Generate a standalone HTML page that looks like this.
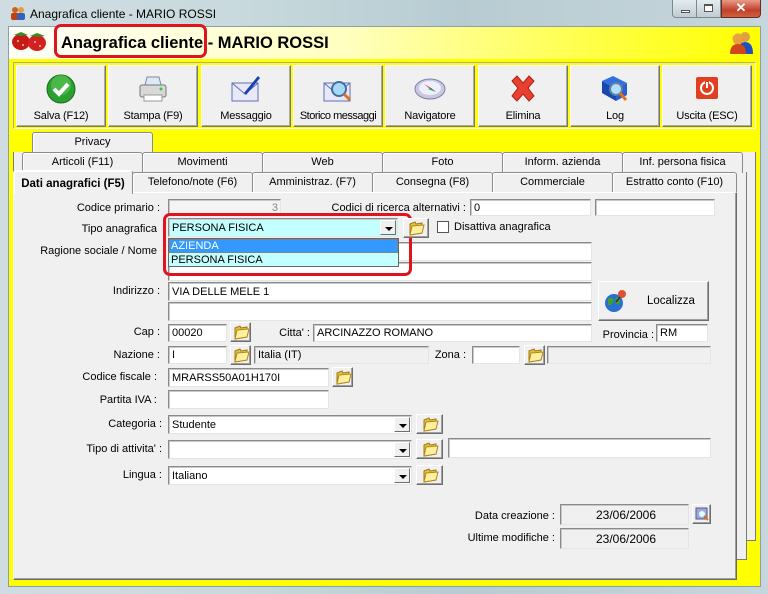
<!DOCTYPE html>
<html><head><meta charset="utf-8"><style>
*{box-sizing:border-box;margin:0;padding:0}
body{width:768px;height:594px;overflow:hidden;position:relative;font-family:"Liberation Sans",sans-serif;font-size:11px;color:#000;background:linear-gradient(90deg,#cfdde3,#c8dadd 30%,#b7ccd2 60%,#c6d6dc);}
.a{position:absolute}
.t{position:absolute;white-space:nowrap;font-size:11px;line-height:14px}
.r{text-align:right}
.fld{position:absolute;background:#fff;border:1px solid;border-color:#8a8a8a #e4e4e4 #e4e4e4 #8a8a8a;box-shadow:inset 1px 1px 0 #c8c8c8;font-size:11px;padding-left:3px;white-space:nowrap;overflow:hidden;display:flex;align-items:center}
.gr{background:#f0f0f0}
.btn{position:absolute;background:#f0f0f0;border:1px solid;border-color:#fff #6e6e6e #6e6e6e #fff;box-shadow:inset -1px -1px 0 #a0a0a0}
.dd{position:absolute;right:1px;top:1px;bottom:1px;width:16px;background:#f0f0f0;border:1px solid;border-color:#fff #6e6e6e #6e6e6e #fff}
.dd:after{content:"";position:absolute;left:4px;top:6px;border-left:4px solid transparent;border-right:4px solid transparent;border-top:4px solid #000}
.tab{position:absolute;background:#f0f0f0;border:1px solid #8c8c8c;border-bottom:none;border-radius:3px 3px 0 0;text-align:center;font-size:11px;line-height:18px;box-shadow:inset 1px 1px 0 #fff;white-space:nowrap}
.tb{position:absolute;top:65px;height:62px;background:#f0f0f0;border:1px solid;border-color:#fff #777 #777 #fff;box-shadow:inset -1px -1px 0 #aaa;text-align:center;font-size:11px;white-space:nowrap}
.tb span{position:absolute;left:0;right:0;top:44px;letter-spacing:-0.2px}
.tb svg{position:absolute;left:50%;margin-left:-16px;top:7px}
</style></head><body>
<!-- title bar -->
<div class="a" style="left:10px;top:6px;width:16px;height:14px">
<svg width="16" height="14"><circle cx="5" cy="4" r="3" fill="#d06020"/><rect x="1" y="7" width="8" height="7" rx="2" fill="#c04010"/><circle cx="11" cy="4" r="3" fill="#e0a040"/><rect x="7" y="7" width="8" height="7" rx="2" fill="#3060c0"/></svg></div>
<div class="t" style="left:30px;top:7px;font-size:12px">Anagrafica cliente - MARIO ROSSI</div>
<div class="a" style="left:672px;top:0;width:25px;height:18px;border:1px solid #7a8a90;border-top:none;border-radius:0 0 0 4px;background:linear-gradient(#e4ecef,#c0ccd2)"><div class="a" style="left:8px;top:10px;width:9px;height:3px;border:1px solid #555;background:#fff"></div></div>
<div class="a" style="left:697px;top:0;width:24px;height:18px;border:1px solid #7a8a90;border-top:none;border-left:none;background:linear-gradient(#e4ecef,#c0ccd2)"><div class="a" style="left:7px;top:4px;width:9px;height:8px;border:1px solid #555;border-top-width:2px;background:#fff"></div></div>
<div class="a" style="left:721px;top:0;width:40px;height:18px;border:1px solid #6a2a20;border-top:none;border-radius:0 0 4px 0;background:linear-gradient(#e89a88,#c0402a 60%,#d06040);color:#fff;font-weight:bold;text-align:center;font-size:13px;line-height:16px">✕</div>

<!-- client -->
<div class="a" style="left:8px;top:26px;width:753px;height:561px;background:#ffff00;border:1px solid #8aa0a8"></div>
<div class="a" style="left:9px;top:27px;width:751px;height:32px;background:linear-gradient(90deg,#fffff8 0%,#ffffc0 45%,#ffff40 80%,#ffff00 100%)"></div>
<svg class="a" style="left:11px;top:30px" width="36" height="22"><ellipse cx="10" cy="12" rx="9" ry="8" fill="#c81818"/><ellipse cx="26" cy="13" rx="9" ry="8" fill="#d42020"/><path d="M3 5 L10 2 L17 5 L10 6Z" fill="#3a8a20"/><path d="M19 6 L26 3 L34 6 L26 7Z" fill="#3a8a20"/><circle cx="7" cy="11" r="1" fill="#f0c0a0"/><circle cx="12" cy="15" r="1" fill="#f0c0a0"/><circle cx="24" cy="12" r="1" fill="#f0c0a0"/><circle cx="29" cy="16" r="1" fill="#f0c0a0"/></svg>
<div class="a" style="left:54px;top:24px;width:153px;height:34px;border:3px solid #e0141e;border-radius:7px"></div>
<div class="t" style="left:61px;top:34px;font-size:16.5px;font-weight:bold;line-height:18px">Anagrafica cliente - MARIO ROSSI</div>
<svg class="a" style="left:729px;top:30px" width="26" height="24"><circle cx="16" cy="7" r="5" fill="#e0a040"/><path d="M9 24 Q9 12 16 12 Q24 12 24 24Z" fill="#2050c0"/><circle cx="9" cy="9" r="5.5" fill="#e8a040"/><path d="M1 24 Q1 14 9 14 Q17 14 17 24Z" fill="#d04818"/></svg>

<!-- toolbar -->
<div class="a" style="left:13px;top:62px;width:743px;height:67px;border:1px solid;border-color:#aaa #fff #fff #aaa"></div>
<div class="tb" style="left:16px;width:90px"><svg width="32" height="32"><circle cx="16" cy="16" r="14" fill="#2aa030" stroke="#167018"/><circle cx="16" cy="12" r="10" fill="#6ad060" opacity=".5"/><path d="M9 16 L14 21 L23 11" stroke="#fff" stroke-width="4" fill="none"/></svg><span>Salva (F12)</span></div>
<div class="tb" style="left:108px;width:90px"><svg width="32" height="32"><path d="M10 4 L22 4 L24 12 L8 12Z" fill="#dde8f8" stroke="#889"/><rect x="3" y="12" width="26" height="12" rx="2" fill="#d8d8d8" stroke="#777"/><rect x="7" y="22" width="18" height="6" fill="#fff" stroke="#999"/><circle cx="24" cy="16" r="1.5" fill="#3c3"/></svg><span>Stampa (F9)</span></div>
<div class="tb" style="left:201px;width:90px"><svg width="32" height="32"><rect x="2" y="10" width="26" height="18" fill="#e8e8f8" stroke="#6070b0"/><path d="M2 10 L15 21 L28 10" fill="none" stroke="#6070b0"/><path d="M14 20 L28 3 L30 5 L16 22Z" fill="#1840b0"/></svg><span>Messaggio</span></div>
<div class="tb" style="left:293px;width:90px"><svg width="32" height="32"><rect x="2" y="10" width="26" height="18" fill="#e8e8f8" stroke="#6070b0"/><path d="M2 10 L15 21 L28 10" fill="none" stroke="#6070b0"/><circle cx="17" cy="16" r="7" fill="#a8d8f8" stroke="#4070a0" stroke-width="2"/><path d="M22 21 L28 27" stroke="#e07020" stroke-width="3"/></svg><span style="letter-spacing:-0.5px">Storico messaggi</span></div>
<div class="tb" style="left:385px;width:90px"><svg width="32" height="32"><ellipse cx="16" cy="16" rx="15" ry="10" fill="#c8c8e0" stroke="#8080a8"/><ellipse cx="16" cy="15" rx="11" ry="7" fill="#eef"/><path d="M10 11 L17 15 L22 19 L15 15Z" fill="#d03020"/><path d="M17 15 L22 19 L14 16Z" fill="#20a040"/></svg><span>Navigatore</span></div>
<div class="tb" style="left:478px;width:90px"><svg width="32" height="32"><path d="M5 8 L10 3 L16 10 L22 3 L27 8 L21 15 L27 23 L22 28 L16 21 L10 28 L5 23 L11 15Z" fill="#e84030" stroke="#b02010"/></svg><span>Elimina</span></div>
<div class="tb" style="left:570px;width:90px"><svg width="32" height="32"><path d="M3 8 L14 3 L28 10 L17 16Z" fill="#3070e0"/><path d="M3 8 L17 16 L17 28 L3 20Z" fill="#1848b0"/><path d="M17 16 L28 10 L28 22 L17 28Z" fill="#2860d0"/><circle cx="17" cy="16" r="6" fill="#b0e0ff" stroke="#6080a0" stroke-width="2"/><path d="M21 20 L27 27" stroke="#e07020" stroke-width="3"/></svg><span>Log</span></div>
<div class="tb" style="left:662px;width:90px"><svg width="32" height="32"><rect x="5" y="4" width="22" height="22" rx="2" fill="#e04020"/><circle cx="16" cy="15" r="6" fill="none" stroke="#fff" stroke-width="2"/><path d="M16 8 L16 15" stroke="#e04020" stroke-width="4"/><path d="M16 9 L16 15" stroke="#fff" stroke-width="2"/></svg><span>Uscita (ESC)</span></div>

<!-- stacked pages -->
<div class="a" style="left:13px;top:152px;width:743px;height:389px;background:#f0f0f0;border:1px solid #7a7a7a;border-top:none"></div>
<div class="a" style="left:13px;top:172px;width:734px;height:388px;background:#f0f0f0;border:1px solid #7a7a7a;border-top:none"></div>
<!-- tabs -->
<div class="tab" style="left:32px;top:132px;width:121px;height:21px">Privacy</div>
<div class="tab" style="left:22px;top:152px;width:121px;height:21px">Articoli (F11)</div>
<div class="tab" style="left:142px;top:152px;width:121px;height:21px">Movimenti</div>
<div class="tab" style="left:262px;top:152px;width:121px;height:21px">Web</div>
<div class="tab" style="left:382px;top:152px;width:121px;height:21px">Foto</div>
<div class="tab" style="left:502px;top:152px;width:121px;height:21px">Inform. azienda</div>
<div class="tab" style="left:622px;top:152px;width:121px;height:21px">Inf. persona fisica</div>
<div class="tab" style="left:132px;top:172px;width:121px;height:21px">Telefono/note (F6)</div>
<div class="tab" style="left:252px;top:172px;width:121px;height:21px">Amministraz. (F7)</div>
<div class="tab" style="left:372px;top:172px;width:121px;height:21px">Consegna (F8)</div>
<div class="tab" style="left:492px;top:172px;width:121px;height:21px">Commerciale</div>
<div class="tab" style="left:612px;top:172px;width:125px;height:21px">Estratto conto (F10)</div>
<!-- main panel -->
<div class="a" style="left:13px;top:192px;width:724px;height:388px;background:#f0f0f0;border:1px solid;border-color:#fff #6a6a6a #6a6a6a #fff;box-shadow:inset -1px -1px 0 #a0a0a0"></div>
<div class="tab" style="left:13px;top:170px;width:120px;height:24px;font-weight:bold;line-height:26px;border-color:#fff #8c8c8c #fff #fff;font-size:11.5px">Dati anagrafici (F5)</div>

<!-- form -->
<div class="t r" style="left:20px;width:140px;top:201px">Codice primario :</div>
<div class="fld gr" style="left:168px;top:199px;width:113px;height:17px;justify-content:flex-end;padding-right:2px;color:#888;background:#f4f4f4">3</div>
<div class="t r" style="left:300px;width:166px;top:201px">Codici di ricerca alternativi :</div>
<div class="fld" style="left:470px;top:199px;width:121px;height:17px">0</div>
<div class="fld" style="left:595px;top:199px;width:120px;height:17px"></div>

<div class="t r" style="left:20px;width:137px;top:222px">Tipo anagrafica</div>
<div class="fld" style="left:168px;top:218px;width:230px;height:19px;background:#c4ffff">PERSONA FISICA<div class="dd"></div></div>
<div class="a" style="left:437px;top:221px;width:12px;height:12px;background:#fff;border:1px solid #555"></div>
<div class="t" style="left:454px;top:220px">Disattiva anagrafica</div>

<div class="t r" style="left:20px;width:137px;top:244px">Ragione sociale / Nome</div>
<div class="fld" style="left:168px;top:242px;width:424px;height:19px"></div>
<div class="fld" style="left:168px;top:262px;width:424px;height:19px"></div>
<!-- dropdown list -->
<div class="a" style="left:168px;top:238px;width:231px;height:29px;background:#c4ffff;border:1px solid #666"></div>
<div class="a" style="left:169px;top:239px;width:229px;height:14px;background:#3399ff;outline:1px dotted #c07020;outline-offset:-1px"></div>
<div class="t" style="left:171px;top:239px;color:#fff">AZIENDA</div>
<div class="t" style="left:171px;top:253px">PERSONA FISICA</div>
<div class="a" style="left:163px;top:213px;width:249px;height:63px;border:3px solid #e0141e;border-radius:7px"></div>

<div class="t r" style="left:20px;width:140px;top:284px">Indirizzo :</div>
<div class="fld" style="left:168px;top:282px;width:424px;height:19px">VIA DELLE MELE 1</div>
<div class="fld" style="left:168px;top:302px;width:424px;height:19px"></div>
<div class="btn" style="left:598px;top:281px;width:111px;height:40px"><svg class="a" style="left:3px;top:6px" width="26" height="26"><circle cx="12" cy="15" r="9" fill="#2a70d0"/><path d="M6 11 Q10 8 12 12 Q10 18 6 17Z M14 9 Q19 10 18 15 Q15 18 13 14Z" fill="#40a030"/><circle cx="20" cy="6" r="4" fill="#e05030"/><path d="M18 9 L14 14" stroke="#333" stroke-width="1.5"/></svg><span class="t" style="left:48px;top:12px;font-size:11.5px">Localizza</span></div>

<div class="t r" style="left:20px;width:140px;top:325px">Cap :</div>
<div class="fld" style="left:168px;top:324px;width:59px;height:18px">00020</div>
<div class="t r" style="left:260px;width:50px;top:326px">Citta' :</div>
<div class="fld" style="left:313px;top:324px;width:279px;height:18px">ARCINAZZO ROMANO</div>
<div class="t r" style="left:590px;width:64px;top:328px">Provincia :</div>
<div class="fld" style="left:656px;top:324px;width:52px;height:18px">RM</div>

<div class="t r" style="left:20px;width:140px;top:348px">Nazione :</div>
<div class="fld" style="left:168px;top:346px;width:59px;height:18px">I</div>
<div class="fld gr" style="left:254px;top:346px;width:175px;height:18px">Italia (IT)</div>
<div class="t r" style="left:420px;width:46px;top:348px">Zona :</div>
<div class="fld" style="left:472px;top:346px;width:48px;height:18px"></div>
<div class="fld gr" style="left:547px;top:346px;width:164px;height:18px"></div>

<div class="t r" style="left:20px;width:137px;top:370px">Codice fiscale :</div>
<div class="fld" style="left:168px;top:368px;width:161px;height:19px">MRARSS50A01H170I</div>
<div class="t r" style="left:20px;width:137px;top:393px">Partita IVA :</div>
<div class="fld" style="left:168px;top:390px;width:161px;height:19px"></div>

<div class="t r" style="left:20px;width:142px;top:417px">Categoria :</div>
<div class="fld" style="left:168px;top:415px;width:244px;height:19px">Studente<div class="dd"></div></div>
<div class="t r" style="left:20px;width:142px;top:442px">Tipo di attivita' :</div>
<div class="fld" style="left:168px;top:440px;width:244px;height:19px"><div class="dd"></div></div>
<div class="fld" style="left:448px;top:438px;width:263px;height:20px"></div>
<div class="t r" style="left:20px;width:142px;top:468px">Lingua :</div>
<div class="fld" style="left:168px;top:466px;width:244px;height:19px">Italiano<div class="dd"></div></div>

<div class="t r" style="left:400px;width:155px;top:509px">Data creazione :</div>
<div class="fld gr" style="left:560px;top:504px;width:129px;height:21px;justify-content:center;font-size:12px">23/06/2006</div>
<div class="btn" style="left:692px;top:504px;width:19px;height:20px"><svg class="a" style="left:2px;top:2px" width="14" height="14"><rect x="1" y="1" width="11" height="11" fill="#a0a8d8" stroke="#505890"/><circle cx="7" cy="7" r="3" fill="#dff"/><path d="M9 9 L13 13" stroke="#e07020" stroke-width="2"/></svg></div>
<div class="t r" style="left:400px;width:155px;top:531px">Ultime modifiche :</div>
<div class="fld gr" style="left:560px;top:528px;width:129px;height:21px;justify-content:center;font-size:12px">23/06/2006</div>

<!-- folder buttons -->
<svg width="0" height="0" style="position:absolute"><defs><g id="fo"><path d="M3 5 L8 3 L9 5 L15 4 L15 14 L3 16Z" fill="#e8c040" stroke="#a07810"/><path d="M5 7 L17 6 L15 14 L3 16Z" fill="#fff0a0" stroke="#b08818"/></g></defs></svg>
<div class="btn" style="left:230px;top:322px;width:21px;height:20px"><svg class="a" style="left:1px;top:0" width="19" height="18"><use href="#fo"/></svg></div>
<div class="btn" style="left:230px;top:345px;width:21px;height:20px"><svg class="a" style="left:1px;top:0" width="19" height="18"><use href="#fo"/></svg></div>
<div class="btn" style="left:524px;top:345px;width:21px;height:20px"><svg class="a" style="left:1px;top:0" width="19" height="18"><use href="#fo"/></svg></div>
<div class="btn" style="left:332px;top:367px;width:21px;height:20px"><svg class="a" style="left:1px;top:0" width="19" height="18"><use href="#fo"/></svg></div>
<div class="btn" style="left:403px;top:218px;width:26px;height:20px"><svg class="a" style="left:3px;top:0" width="19" height="18"><use href="#fo"/></svg></div>
<div class="btn" style="left:416px;top:414px;width:27px;height:20px"><svg class="a" style="left:4px;top:0" width="19" height="18"><use href="#fo"/></svg></div>
<div class="btn" style="left:416px;top:439px;width:27px;height:20px"><svg class="a" style="left:4px;top:0" width="19" height="18"><use href="#fo"/></svg></div>
<div class="btn" style="left:416px;top:465px;width:27px;height:20px"><svg class="a" style="left:4px;top:0" width="19" height="18"><use href="#fo"/></svg></div>
</body></html>
